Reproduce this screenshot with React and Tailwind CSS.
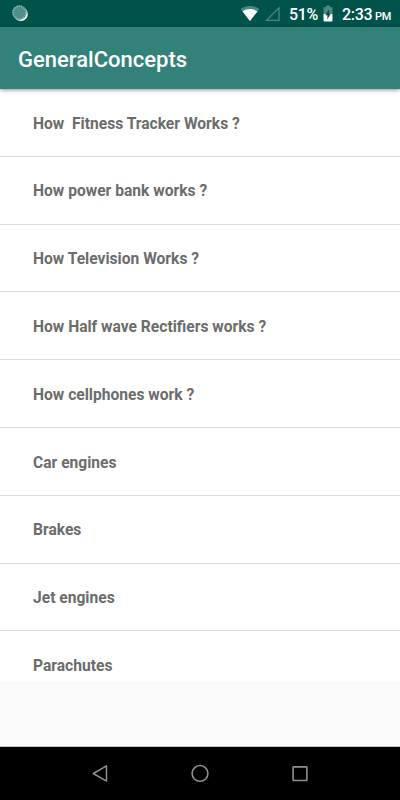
const topics = [
  'How  Fitness Tracker Works ?',
  'How power bank works ?',
  'How Television Works ?',
  'How Half wave Rectifiers works ?',
  'How cellphones work ?',
  'Car engines',
  'Brakes',
  'Jet engines',
  'Parachutes',
]

function StatusBar() {
  return (
    <div className="h-[27px] shrink-0 bg-[#00534b] flex items-center text-white font-medium">
      <svg className="ml-3 -mt-px" width="17" height="17" viewBox="0 0 17 17">
        <circle cx="8.8" cy="9" r="7" fill="#ffffff" />
        <circle cx="7.4" cy="7.6" r="7.3" fill="#4f918a" />
        <circle cx="7.4" cy="7.6" r="6.4" fill="none" stroke="#8fbab5" strokeWidth="1.4" strokeDasharray="1.2 1.2" />
      </svg>
      <svg className="ml-auto" width="20" height="17" viewBox="0 0 20 17">
        <path d="M0.6 4C6 0 14 0 19.4 4L10 16Z" fill="#4d8781" />
        <path d="M2.6 6.4C7 3.2 13 3.2 17.4 6.4L10 16Z" fill="#ffffff" />
      </svg>
      <svg className="ml-[5px] mt-px" width="16" height="16" viewBox="0 0 16 16">
        <path d="M1.4 14.4H14V1.8Z" fill="none" stroke="#4d8781" strokeWidth="1.3" />
      </svg>
      <span className="ml-[8px] w-[29px] mt-[3px] text-[16px] leading-none tracking-[-0.3px] whitespace-nowrap">51%</span>
      <svg className="ml-[5px]" width="10" height="17" viewBox="0 0 10 17">
        <path d="M3 0.5H7V2.2H9.5V9H0.5V2.2H3Z" fill="#4d8781" />
        <path d="M0.5 9H9.5V15.4Q9.5 16.5 8.4 16.5H1.6Q0.5 16.5 0.5 15.4Z" fill="#ffffff" />
        <path d="M6 4.2L2.3 10.2H4.4V14.4L7.8 8.6H6Z" fill="#00534b" />
      </svg>
      <span className="ml-[9px] mr-2 w-[50px] mt-[3px] text-[16px] leading-none tracking-[-0.3px] whitespace-nowrap">
        2:33 <span className="-ml-px text-[11px]">PM</span>
      </span>
    </div>
  )
}

function NavBar() {
  return (
    <div className="h-[54px] shrink-0 bg-black border-t border-[#c4c6c6] flex items-center justify-center gap-[80px]">
      <svg width="20" height="20" viewBox="0 0 20 20" fill="none" stroke="#8f8f8f" strokeWidth="1.5" strokeLinejoin="round">
        <path d="M16.5 1.9V17.1L3.3 9.5Z" />
      </svg>
      <svg width="20" height="20" viewBox="0 0 20 20" fill="none" stroke="#8f8f8f" strokeWidth="1.6">
        <circle cx="10" cy="9.4" r="7.9" />
      </svg>
      <svg width="20" height="20" viewBox="0 0 20 20" fill="none" stroke="#8f8f8f" strokeWidth="1.6">
        <rect x="3.1" y="2.9" width="13.8" height="13.6" rx="0.4" />
      </svg>
    </div>
  )
}

export default function App() {
  return (
    <div className="w-[400px] h-[800px] flex flex-col overflow-hidden bg-[#fafafa] font-['Roboto',sans-serif]">
      <StatusBar />
      <header className="relative z-10 h-[62px] shrink-0 bg-[#33827a] flex items-center pl-[18px] pt-[3px] shadow-[0_1px_4px_rgba(0,0,0,0.45)]">
        <h1 className="text-[22px] leading-none font-medium text-white">GeneralConcepts</h1>
      </header>
      <ul className="h-[592px] shrink-0 overflow-hidden bg-white">
        {topics.map(topic => (
          <li key={topic} className="h-[67.8px] pl-[33px] pt-[4px] flex items-center border-b border-[#dcdcdc]">
            <span className="whitespace-pre text-[15.6px] leading-none font-bold text-[#6c6c6c]">{topic}</span>
          </li>
        ))}
      </ul>
      <div className="flex-1" />
      <NavBar />
    </div>
  )
}
